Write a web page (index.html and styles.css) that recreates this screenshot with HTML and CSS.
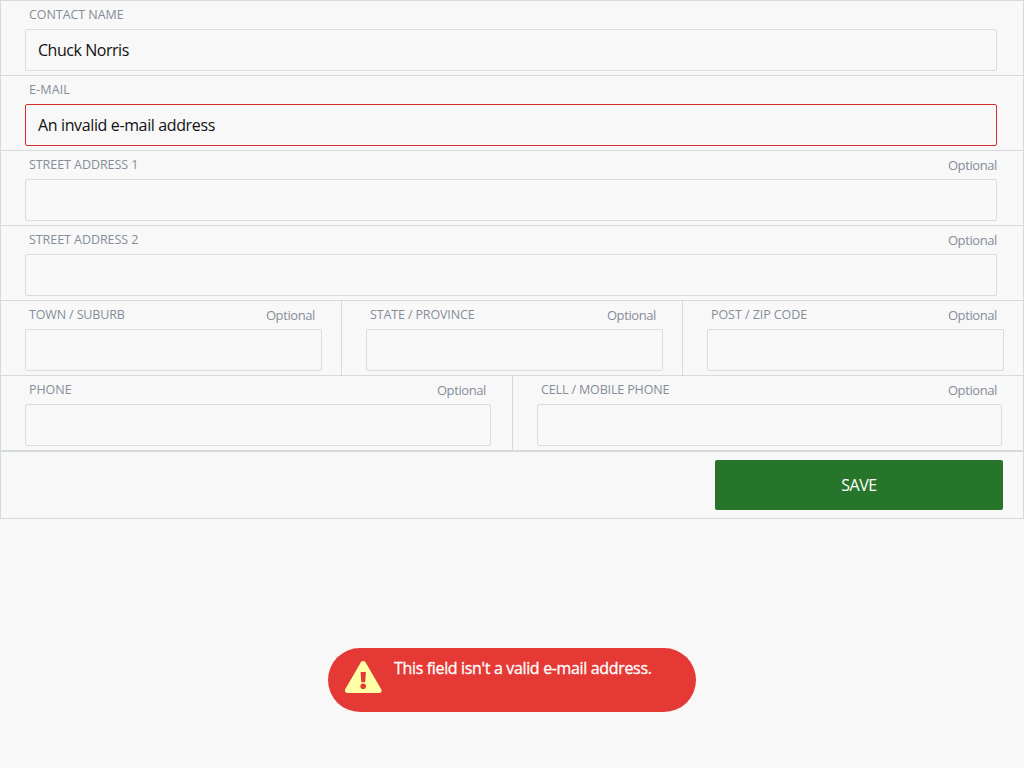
FILE: index.html
```html
<!DOCTYPE html>
<html lang="en">
<head>
<meta charset="utf-8">
<title>Contact details</title>
<link rel="stylesheet" href="styles.css">
</head>
<body>
<form class="form">
  <div class="row">
    <div class="cell"><div class="head"><label class="label" for="name">CONTACT NAME</label></div><input class="field name" id="name" value="Chuck Norris"></div>
  </div>
  <div class="row">
    <div class="cell"><div class="head"><label class="label label-email" for="email">E-MAIL</label></div><input class="field invalid" id="email" value="An invalid e-mail address"></div>
  </div>
  <div class="row">
    <div class="cell"><div class="head"><label class="label" for="street1">STREET ADDRESS 1</label><span class="optional">Optional</span></div><input class="field" id="street1"></div>
  </div>
  <div class="row">
    <div class="cell"><div class="head"><label class="label" for="street2">STREET ADDRESS 2</label><span class="optional">Optional</span></div><input class="field" id="street2"></div>
  </div>
  <div class="row thirds">
    <div class="cell"><div class="head"><label class="label label-tight" for="town">TOWN / SUBURB</label><span class="optional">Optional</span></div><input class="field" id="town"></div>
    <div class="cell"><div class="head"><label class="label label-tight" for="state">STATE / PROVINCE</label><span class="optional">Optional</span></div><input class="field" id="state"></div>
    <div class="cell"><div class="head"><label class="label" for="zip">POST / ZIP CODE</label><span class="optional">Optional</span></div><input class="field" id="zip"></div>
  </div>
  <div class="row halves">
    <div class="cell"><div class="head"><label class="label" for="phone">PHONE</label><span class="optional">Optional</span></div><input class="field" id="phone"></div>
    <div class="cell"><div class="head"><label class="label label-tight" for="cell">CELL / MOBILE PHONE</label><span class="optional">Optional</span></div><input class="field" id="cell"></div>
  </div>
  <div class="actions"><button class="save" type="button">SAVE</button></div>
</form>
<div class="toast" role="alert">
  <svg class="warning" width="38" height="34" viewBox="0 0 38 34" aria-hidden="true">
    <path fill="#ffffa8" d="M15.9 2.2Q18.2-.4 20.5 2.2L36.2 29.2Q37.7 32.7 34.1 33H2.5Q-1.3 32.7.2 29.2Z"/>
    <path fill="#e53935" d="M15.6 12H20.9L20.2 22.3H16.3Z"/>
    <circle fill="#e53935" cx="18.2" cy="26.3" r="2.8"/>
  </svg>
  <span class="message">This field isn't a valid e-mail address.</span>
</div>
</body>
</html>
```
FILE: styles.css
```css
* { box-sizing: border-box; }
body {
  margin: 0;
  background: #f8f8f8;
  font-family: "Open Sans", "Noto Sans", sans-serif;
  font-size: 16px;
}
.form {
  width: 1024px;
  height: 519px;
  border: 1px solid #d5dadd;
}
.row {
  display: grid;
  grid-template-columns: 1fr;
  height: 75px;
  border-bottom: 1px solid #d5dadd;
}
.thirds { grid-template-columns: 341px 341px 340px; }
.halves { grid-template-columns: 512px 510px; }
.cell {
  min-width: 0;
  padding: 0 26px 0 24px;
}
.cell:not(:last-child) { border-right: 1px solid #d5dadd; }
.thirds .cell { padding-right: 19px; }
.halves .cell { padding-right: 21px; }
.head {
  display: flex;
  justify-content: space-between;
  height: 28px;
  padding: 4px 0 0 4px;
  color: #858d98;
  font-size: 13px;
  line-height: 20px;
  white-space: nowrap;
}
.thirds .head { padding-right: 7px; }
.halves .head { padding-right: 5px; }
.label {
  font-size: 12.5px;
  letter-spacing: -0.06px;
}
.label-email { letter-spacing: 0.15px; }
.label-tight { letter-spacing: -0.14px; }
.optional { letter-spacing: -0.4px; }
.field {
  display: block;
  width: 100%;
  height: 42px;
  padding: 0 12px;
  border: 1px solid #dcdcdc;
  border-radius: 2px;
  outline: 0;
  background: transparent;
  color: #111;
  font: inherit;
  letter-spacing: -0.37px;
}
.name { letter-spacing: -0.46px; }
.invalid { border-color: #d32f2f; }
.actions {
  display: flex;
  justify-content: flex-end;
  height: 67px;
  padding: 8px 20px 0;
  border-top: 1px solid #d5dadd;
}
.save {
  width: 288px;
  height: 50px;
  padding: 0;
  border: 0;
  border-radius: 2px;
  background: #27752a;
  color: #fff;
  font: inherit;
  letter-spacing: -0.4px;
}
.toast {
  display: flex;
  width: 368.5px;
  height: 64px;
  margin: 129px 0 0 327.5px;
  padding: 12px 17.5px;
  border-radius: 32px;
  background: #e53935;
  color: #fff;
  white-space: nowrap;
}
.warning { flex: none; }
.message {
  margin: -2px 0 0 11px;
  line-height: 20px;
  letter-spacing: -0.34px;
  -webkit-text-stroke: 0.3px #fff;
}
```
